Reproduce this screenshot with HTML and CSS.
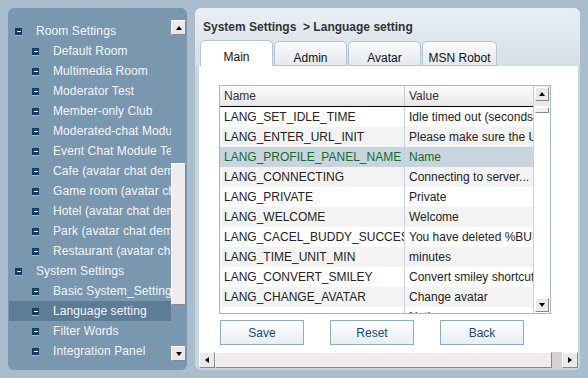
FILE: index.html
```html
<!DOCTYPE html>
<html lang="en">
<head>
  <meta charset="UTF-8">
  <title>Admin - Language setting</title>
  <link rel="stylesheet" href="styles.css">
</head>
<body>
  <div class="app">
    <aside class="side">
      <ul class="tree">
        <li class="node top"><span class="box"></span>Room Settings</li>
        <li class="node"><span class="box"></span>Default Room</li>
        <li class="node"><span class="box"></span>Multimedia Room</li>
        <li class="node"><span class="box"></span>Moderator Test</li>
        <li class="node"><span class="box"></span>Member-only Club</li>
        <li class="node"><span class="box"></span>Moderated-chat Module</li>
        <li class="node"><span class="box"></span>Event Chat Module Test</li>
        <li class="node"><span class="box"></span>Cafe (avatar chat demo)</li>
        <li class="node"><span class="box"></span>Game room (avatar chat demo)</li>
        <li class="node"><span class="box"></span>Hotel (avatar chat demo)</li>
        <li class="node"><span class="box"></span>Park (avatar chat demo)</li>
        <li class="node"><span class="box"></span>Restaurant (avatar chat demo)</li>
        <li class="node top"><span class="box"></span>System Settings</li>
        <li class="node"><span class="box"></span>Basic System_Settings</li>
        <li class="node sel"><span class="box"></span>Language setting</li>
        <li class="node"><span class="box"></span>Filter Words</li>
        <li class="node"><span class="box"></span>Integration Panel</li>
      </ul>
      <div class="vscroll">
        <span class="sbtn"><i class="arr up"></i></span>
        <span class="strack"><span class="sthumb"></span></span>
        <span class="sbtn"><i class="arr down"></i></span>
      </div>
    </aside>

    <main class="panel">
      <div class="panel-head">
        <h2 class="crumb">System Settings &nbsp;&gt; Language setting</h2>
        <div class="tabs">
          <span class="tab active">Main</span>
          <span class="tab">Admin</span>
          <span class="tab">Avatar</span>
          <span class="tab">MSN Robot</span>
        </div>
      </div>

      <div class="panel-body">
        <div class="grid">
          <div class="grid-main">
            <div class="grid-head">
              <span class="cell c1">Name</span>
              <span class="cell c2">Value</span>
            </div>
            <div class="row"><span class="cell c1">LANG_SET_IDLE_TIME</span><span class="cell c2">Idle timed out (seconds)</span></div>
            <div class="row"><span class="cell c1">LANG_ENTER_URL_INIT</span><span class="cell c2">Please make sure the URL is correct</span></div>
            <div class="row sel"><span class="cell c1">LANG_PROFILE_PANEL_NAME</span><span class="cell c2">Name</span></div>
            <div class="row"><span class="cell c1">LANG_CONNECTING</span><span class="cell c2">Connecting to server...</span></div>
            <div class="row"><span class="cell c1">LANG_PRIVATE</span><span class="cell c2">Private</span></div>
            <div class="row"><span class="cell c1">LANG_WELCOME</span><span class="cell c2">Welcome</span></div>
            <div class="row"><span class="cell c1">LANG_CACEL_BUDDY_SUCCESS</span><span class="cell c2">You have deleted %BUDDY%</span></div>
            <div class="row"><span class="cell c1">LANG_TIME_UNIT_MIN</span><span class="cell c2">minutes</span></div>
            <div class="row"><span class="cell c1">LANG_CONVERT_SMILEY</span><span class="cell c2">Convert smiley shortcuts</span></div>
            <div class="row"><span class="cell c1">LANG_CHANGE_AVATAR</span><span class="cell c2">Change avatar</span></div>
            <div class="row"><span class="cell c1"></span><span class="cell c2">Notice</span></div>
          </div>
          <div class="grid-scroll">
            <span class="sbtn small"><i class="arr up"></i></span>
            <span class="gthumb"></span>
            <span class="gspace"></span>
            <span class="sbtn small"><i class="arr down"></i></span>
          </div>
        </div>

        <div class="actions">
          <button class="btn">Save</button>
          <button class="btn">Reset</button>
          <button class="btn">Back</button>
        </div>
      </div>

      <div class="hscroll">
        <span class="sbtn wide"><i class="arr left"></i></span>
        <span class="hthumb"></span>
        <span class="htrack"></span>
        <span class="sbtn wide"><i class="arr right"></i></span>
      </div>
    </main>
  </div>
</body>
</html>
```

FILE: styles.css
```css
:root {
  --bg-page: #a9bdcc;
  --bg-side: #7a97b0;
  --bg-side-sel: #5d7d97;
  --bg-frame: #c8d6e1;
  --line: #b4c5d3;
  --grid-line: #c5d1db;
  --btn-face: #ece9ec;
  --btn-dark: #8a888a;
  --text-main: #222;
}
body {
  margin: 0;
  width: 588px;
  height: 378px;
  overflow: hidden;
  background: var(--bg-page);
  font-family: "Liberation Sans", Arial, sans-serif;
  font-size: 12px;
  color: var(--text-main);
}
.app {
  display: flex;
  gap: 8px;
  padding: 8px;
}

/* left tree */
.side {
  width: 179px;
  height: 362px;
  box-sizing: border-box;
  padding: 12px 1px 9px 1px;
  background: var(--bg-side);
  border-radius: 6px;
  display: flex;
}
.tree {
  list-style: none;
  margin: 1px 0 0 0;
  padding: 0;
  width: 162px;
  overflow: hidden;
}
.node {
  height: 20px;
  line-height: 20px;
  padding-left: 23px;
  display: flex;
  align-items: center;
  white-space: nowrap;
  letter-spacing: 0.1px;
  color: #f3f6f9;
}
.node.top {
  padding-left: 6px;
}
.node.sel {
  background: var(--bg-side-sel);
}
.box {
  flex: none;
  position: relative;
  width: 7px;
  height: 7px;
  margin-right: 14px;
  background: #163c66;
  box-shadow: 0 1px 0 #a3bace;
}
.box::after {
  content: '';
  position: absolute;
  left: 2px;
  top: 3px;
  width: 4px;
  height: 1px;
  background: #fff;
}

/* scrollbars */
.vscroll {
  width: 15px;
  display: flex;
  flex-direction: column;
}
.sbtn {
  flex: none;
  width: 15px;
  height: 15px;
  box-sizing: border-box;
  background: var(--btn-face);
  border: 1px solid;
  border-color: #fff var(--btn-dark) var(--btn-dark) #fff;
  display: flex;
  align-items: center;
  justify-content: center;
}
.sbtn.small {
  width: 14px;
  height: 14px;
}
.sbtn.wide {
  width: 16px;
  height: 16px;
}
.arr {
  width: 0;
  height: 0;
  border: 3px solid transparent;
}
.arr.up {
  border-top: 0;
  border-bottom: 4px solid #000;
}
.arr.down {
  border-bottom: 0;
  border-top: 4px solid #000;
}
.arr.left {
  border-left: 0;
  border-right: 4px solid #000;
}
.arr.right {
  border-right: 0;
  border-left: 4px solid #000;
}
.strack {
  flex: 1;
}
.sthumb {
  display: block;
  margin-top: 128px;
  height: 142px;
  box-sizing: border-box;
  background: #efebef;
  border: 1px solid;
  border-color: #fff var(--btn-dark) var(--btn-dark) #fff;
}

/* right panel */
.panel {
  width: 385px;
  height: 362px;
  background: var(--bg-frame);
  border-radius: 6px;
  display: flex;
  flex-direction: column;
  overflow: hidden;
}
.panel-head {
  height: 58px;
  padding-left: 5px;
  background: linear-gradient(#e9eff4, #d5dfe7);
}
.crumb {
  margin: 0;
  height: 32px;
  box-sizing: border-box;
  padding: 12px 0 0 3px;
  line-height: 14px;
  font-size: 12px;
  font-weight: bold;
  color: #333;
}
.tabs {
  display: flex;
  align-items: flex-end;
  gap: 1px;
  height: 26px;
}
.tab {
  width: 73px;
  height: 25px;
  box-sizing: border-box;
  padding-top: 6px;
  line-height: 20px;
  text-align: center;
  color: #111;
  border: 1px solid var(--line);
  border-radius: 5px 5px 0 0;
  background: linear-gradient(#fbfcfd, #e2e9ef);
}
.tab.active {
  height: 26px;
  background: #fff;
  border-bottom: 0;
}
.tab:last-child {
  width: 75px;
}
.panel-body {
  flex: 1;
  margin: 0 2px 0 4px;
  padding: 19px 0 0 20px;
  background: #fff;
}

/* grid */
.grid {
  width: 332px;
  height: 229px;
  box-sizing: border-box;
  border: 1px solid #a3b7c8;
  display: flex;
  overflow: hidden;
}
.grid-main {
  width: 313px;
  overflow: hidden;
}
.grid-head {
  display: flex;
  height: 21px;
  line-height: 20px;
  box-sizing: border-box;
  border-bottom: 1px solid #000;
  background: linear-gradient(#fdfdfd, #e6e6e6);
  color: #333;
}
.grid-head .c1 {
  border-right-color: #c8c8c8;
}
.row {
  display: flex;
  height: 20px;
  line-height: 20px;
}
.row:nth-child(odd) {
  background: #f3f3f3;
}
.row.sel {
  background: #c9d5de;
  color: #186b2d;
}
.cell {
  display: block;
  box-sizing: border-box;
  padding-left: 4px;
  white-space: nowrap;
  overflow: hidden;
}
.c1 {
  width: 185px;
  flex: none;
  border-right: 1px solid var(--grid-line);
}
.c2 {
  width: 128px;
  flex: none;
}
.grid-scroll {
  width: 17px;
  box-sizing: border-box;
  border-left: 1px solid var(--grid-line);
  display: flex;
  flex-direction: column;
  align-items: center;
  padding: 1px 0;
  background: linear-gradient(#f4f4f4, #e8e8e8) top / 100% 20px no-repeat, #fff;
}
.gthumb {
  width: 14px;
  height: 6px;
  margin-top: 6px;
  box-sizing: border-box;
  background: #efebef;
  border: 1px solid;
  border-color: #fff var(--btn-dark) var(--btn-dark) #fff;
}
.gspace {
  flex: 1;
}

/* buttons */
.actions {
  display: flex;
  gap: 26px;
  margin: 6px 0 0 1px;
}
.btn {
  width: 84px;
  height: 25px;
  padding: 0;
  border: 1px solid #8fabc3;
  background: linear-gradient(#fff, #e8edf1);
  font: inherit;
  color: #1b4a78;
}

.hscroll {
  height: 16px;
  margin: 0 2px 2px 4px;
  display: flex;
  background: #d6d3ce;
}
.hthumb {
  width: 337px;
  box-sizing: border-box;
  background: #efebef;
  border: 1px solid;
  border-color: #fff var(--btn-dark) var(--btn-dark) #fff;
}
.htrack {
  flex: 1;
}
```
